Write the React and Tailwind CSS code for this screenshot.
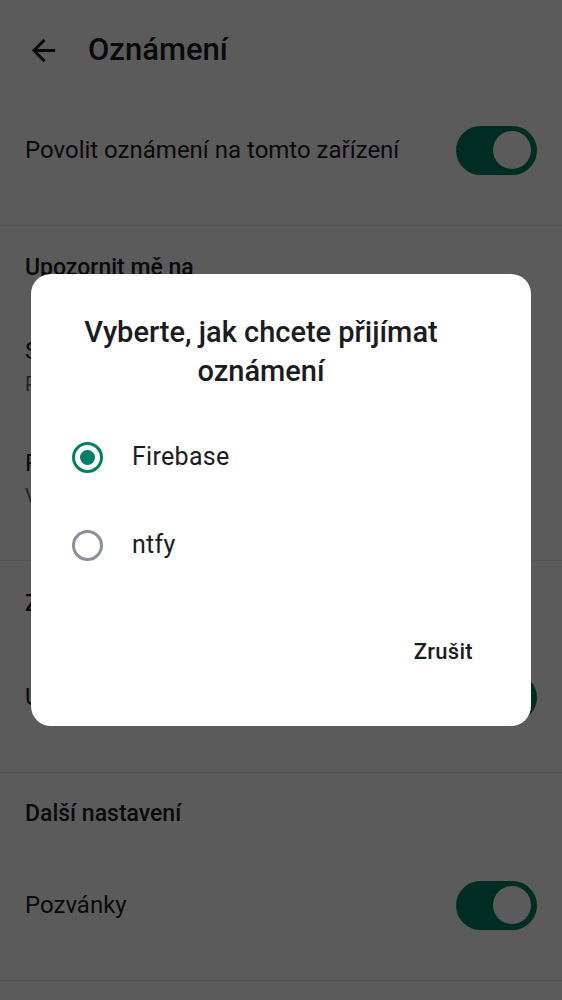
import { useState } from "react";

const font = { fontFamily: "Roboto, 'Noto Sans', sans-serif" };

function Toggle({ on = true }) {
  return (
    <div
      className={
        "flex h-[49px] w-[81px] shrink-0 items-center rounded-full px-[6px] " +
        (on ? "justify-end bg-[#007e63]" : "justify-start bg-[#e0e0e0]")
      }>
      <div className="h-[38px] w-[38px] rounded-full bg-white" />
    </div>
  );
}

function Divider() {
  return <div className="h-px w-full bg-[#ececec]" />;
}

function Radio({ checked }) {
  return (
    <div
      className={
        "flex h-[31px] w-[31px] shrink-0 items-center justify-center rounded-full border-[3px] " +
        (checked ? "border-[#007e63]" : "border-[#8b9099]")
      }>
      {checked && <div className="h-[15px] w-[15px] rounded-full bg-[#007e63]" />}
    </div>
  );
}

function SwitchRow({ label }) {
  return (
    <div className="mb-[25px] flex h-[100px] items-center justify-between">
      <span className="text-[24px]">{label}</span>
      <Toggle />
    </div>
  );
}

export default function App() {
  const [choice, setChoice] = useState("firebase");

  return (
    <div className="relative h-[1000px] w-full overflow-hidden bg-white text-[#1c1b1f]" style={font}>
      {/* hlavička */}
      <div className="flex h-[100px] items-center pl-[26px]">
        <svg width="35" height="35" viewBox="0 0 24 24" fill="#1c1b1f">
          <path d="M20 11H7.83l5.59-5.59L12 4l-8 8 8 8 1.41-1.41L7.83 13H20v-2z" />
        </svg>
        <h1 className="ml-[27px] text-[31px] font-medium">Oznámení</h1>
      </div>

      <div className="px-[25px]">
        <SwitchRow label="Povolit oznámení na tomto zařízení" />
      </div>
      <Divider />

      {/* Upozornit mě na */}
      <div className="px-[25px]">
        <div className="flex h-[84px] items-center text-[23px] font-medium">Upozornit mě na</div>
        <div className="flex h-[112px] flex-col justify-center">
          <span className="text-[24px]">Sledované události</span>
          <span className="text-[20px] text-[#5f6368]">Při každé změně</span>
        </div>
        <div className="mb-[26px] flex h-[112px] flex-col justify-center">
          <span className="text-[24px]">Připomínky</span>
          <span className="text-[20px] text-[#5f6368]">Vždy</span>
        </div>
      </div>
      <Divider />

      <div className="px-[25px]">
        <div className="flex h-[86px] items-center text-[23px] font-medium">Zvuk a vibrace</div>
        <SwitchRow label="Upozornění se zvukem" />
      </div>
      <Divider />

      <div className="px-[25px]">
        <div className="flex h-[82px] items-center text-[23px] font-medium">Další nastavení</div>
        <SwitchRow label="Pozvánky" />
      </div>
      <Divider />

      {/* překryv a dialog */}
      <div className="absolute inset-0 flex items-center justify-center bg-black/[0.643]">
        <div className="w-[500px] rounded-[20px] bg-white pt-[39px] pb-[51px]">
          <h2 className="pl-[40px] pr-[80px] text-center text-[29px] leading-[39px] font-medium">
            Vyberte, jak chcete přijímat oznámení
          </h2>
          <div className="mt-[22px]">
            {[
              { value: "firebase", label: "Firebase" },
              { value: "ntfy", label: "ntfy" },
            ].map((option) => (
              <button
                key={option.value}
                onClick={() => setChoice(option.value)}
                className="flex h-[88px] w-full items-center pl-[41px] text-left">
                <Radio checked={choice === option.value} />
                <span className="ml-[29px] text-[25px] tracking-[0.3px]">{option.label}</span>
              </button>
            ))}
          </div>
          <div className="mt-[38px] flex h-[48px] items-center justify-end pr-[58px]">
            <button className="text-[22px] font-medium tracking-[0.3px]">Zrušit</button>
          </div>
        </div>
      </div>
    </div>
  );
}
